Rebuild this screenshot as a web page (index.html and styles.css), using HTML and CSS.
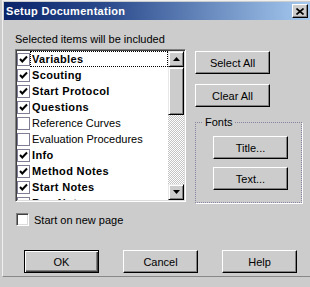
FILE: index.html
```html
<!DOCTYPE html>
<html lang="en">
<head>
    <meta charset="UTF-8">
    <title>Setup Documentation</title>
    <link rel="stylesheet" href="styles.css">
</head>
<body>
    <div class="window">
        <div class="titlebar">
            <span class="title-text">Setup Documentation</span>
            <button class="close-btn">
                <svg width="8" height="7" viewBox="0 0 8 7"><path d="M0.5 0.5 L7.5 6.5 M7.5 0.5 L0.5 6.5" stroke="#000" stroke-width="1.6" fill="none"/></svg>
            </button>
        </div>

        <div class="content">
            <div class="list-label">Selected items will be included</div>

            <div class="left-col">
                <div class="listbox">
                    <div class="items">
                        <div class="item bold"><span class="box checked"></span><span class="label focus">Variables</span></div>
                        <div class="item bold"><span class="box checked"></span><span class="label">Scouting</span></div>
                        <div class="item bold"><span class="box checked"></span><span class="label">Start Protocol</span></div>
                        <div class="item bold"><span class="box checked"></span><span class="label">Questions</span></div>
                        <div class="item"><span class="box"></span><span class="label">Reference Curves</span></div>
                        <div class="item"><span class="box"></span><span class="label">Evaluation Procedures</span></div>
                        <div class="item bold"><span class="box checked"></span><span class="label">Info</span></div>
                        <div class="item bold"><span class="box checked"></span><span class="label">Method Notes</span></div>
                        <div class="item bold"><span class="box checked"></span><span class="label">Start Notes</span></div>
                        <div class="item bold"><span class="box"></span><span class="label">Run Notes</span></div>
                    </div>
                    <div class="scrollbar">
                        <div class="sb-btn">
                            <svg width="7" height="4" viewBox="0 0 7 4"><path d="M3.5 0 L7 4 L0 4 Z" fill="#000"/></svg>
                        </div>
                        <div class="sb-thumb"></div>
                        <div class="sb-track"></div>
                        <div class="sb-btn">
                            <svg width="7" height="4" viewBox="0 0 7 4"><path d="M0 0 L7 0 L3.5 4 Z" fill="#000"/></svg>
                        </div>
                    </div>
                </div>

                <label class="check-row">
                    <span class="sunken-box"></span>
                    <span>Start on new page</span>
                </label>
            </div>

            <div class="right-col">
                <button class="btn">Select All</button>
                <button class="btn">Clear All</button>
                <fieldset class="group">
                    <legend>Fonts</legend>
                    <div class="group-body">
                        <button class="btn">Title...</button>
                        <button class="btn">Text...</button>
                    </div>
                </fieldset>
            </div>
        </div>

        <div class="footer">
            <button class="btn default">OK</button>
            <button class="btn">Cancel</button>
            <button class="btn">Help</button>
        </div>
    </div>
</body>
</html>
```

FILE: styles.css
```css
* {
    margin: 0;
    padding: 0;
    box-sizing: border-box;
}

body {
    font-family: 'Liberation Sans', Arial, sans-serif;
    font-size: 11px;
    color: #000;
    background: #cccccc;
}

.window {
    margin-left: 2px;
    width: 308px;
    height: 277px;
    border-left: 1px solid #f0f0f0;
    border-top: 1px solid #f0f0f0;
    border-bottom: 1px solid #888888;
    padding: 1px 0 0 1px;
    background: #cccccc;
}

.titlebar {
    height: 18px;
    display: flex;
    align-items: center;
    justify-content: space-between;
    padding-left: 2px;
    background: linear-gradient(90deg, #0a246a 0%, #2d4d8e 35%, #a6caf0 100%);
}

.title-text {
    color: #fff;
    font-weight: bold;
    font-size: 11px;
    letter-spacing: 0.3px;
}

.close-btn {
    width: 16px;
    height: 14px;
    margin-right: 2px;
    display: flex;
    align-items: center;
    justify-content: center;
    background: #cccccc;
    border: 1px solid;
    border-color: #fff #000 #000 #fff;
    box-shadow: inset -1px -1px #808080;
}

.content {
    display: grid;
    grid-template-columns: 171px 107px;
    column-gap: 9px;
    padding: 13px 0 0 11px;
}

.list-label {
    grid-column: 1 / 3;
    height: 13px;
    line-height: 13px;
    margin-bottom: 3px;
}

.listbox {
    width: 171px;
    height: 153px;
    display: flex;
    border: 1px solid;
    border-color: #808080 #fff #fff #808080;
    box-shadow: inset 1px 1px #404040, inset -1px -1px #dcdcdc;
    padding: 1px;
    background: #fff;
}

.items {
    flex: 1;
    overflow: hidden;
}

.item {
    height: 16px;
    display: flex;
    align-items: center;
}

.item.bold .label {
    font-weight: bold;
    letter-spacing: 0.35px;
}

.box {
    width: 13px;
    height: 13px;
    flex-shrink: 0;
    border: 1px solid #7d7d98;
    background: #fff;
}

.box.checked {
    background: #fff url("data:image/svg+xml,%3Csvg xmlns='http://www.w3.org/2000/svg' width='11' height='11'%3E%3Cpath d='M2 5 L4.3 7.5 L9 2.5' stroke='black' stroke-width='2' fill='none'/%3E%3C/svg%3E") no-repeat center;
}

.label {
    flex: 1;
    height: 16px;
    line-height: 14px;
    padding-left: 1px;
    border: 1px solid transparent;
    white-space: nowrap;
}

.label.focus {
    border: 1px dotted #000;
}

.scrollbar {
    width: 16px;
    display: flex;
    flex-direction: column;
}

.sb-btn,
.sb-thumb {
    background: #cccccc;
    border: 1px solid;
    border-color: #e8e8e8 #000 #000 #e8e8e8;
    box-shadow: inset 1px 1px #fff, inset -1px -1px #808080;
}

.sb-btn {
    height: 16px;
    display: flex;
    align-items: center;
    justify-content: center;
}

.sb-thumb {
    height: 48px;
}

.sb-track {
    flex: 1;
    background: repeating-conic-gradient(#fff 0 25%, #c4c4c4 0 50%) 0 0 / 2px 2px;
}

.check-row {
    display: flex;
    align-items: center;
    gap: 5px;
    margin-top: 11px;
    padding-left: 1px;
    height: 13px;
}

.sunken-box {
    width: 13px;
    height: 13px;
    background: #fff;
    border: 1px solid;
    border-color: #808080 #fff #fff #808080;
    box-shadow: inset 1px 1px #404040, inset -1px -1px #dcdcdc;
}

.right-col {
    display: flex;
    flex-direction: column;
    padding-top: 2px;
}

.btn {
    width: 75px;
    height: 23px;
    font-family: 'Liberation Sans', Arial, sans-serif;
    font-size: 11px;
    color: #000;
    background: #cccccc;
    border: 1px solid;
    border-color: #fff #000 #000 #fff;
    box-shadow: inset -1px -1px #808080;
}

.right-col > .btn + .btn {
    margin-top: 10px;
}

.group {
    margin-top: 9px;
    width: 107px;
    border: 1px dotted #85839f;
    box-shadow: 1px 1px #fff;
    padding: 0 0 12px 0;
}

.group legend {
    margin-left: 7px;
    padding: 0 2px;
    line-height: 13px;
}

.group-body {
    display: flex;
    flex-direction: column;
    gap: 8px;
    padding: 7px 0 0 17px;
}

.footer {
    display: flex;
    gap: 24px;
    padding: 24px 0 0 20px;
}

.btn.default {
    border: 1px solid #000;
    box-shadow: inset 1px 1px #fff, inset -1px -1px #404040, inset -2px -2px #808080;
}
```
